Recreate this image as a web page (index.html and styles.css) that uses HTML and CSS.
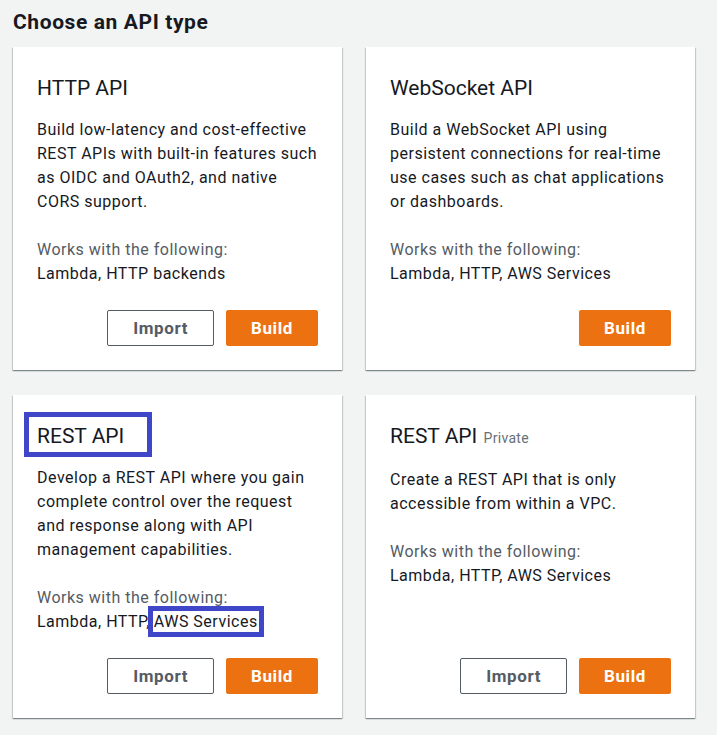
FILE: index.html
```html
<!DOCTYPE html>
<html lang="en">
<head>
<meta charset="utf-8">
<title>Choose an API type</title>
<link rel="stylesheet" href="styles.css">
</head>
<body>
<main class="page">
  <h1 class="page-title">Choose an API type</h1>
  <div class="grid">
    <section class="card">
      <h2 class="card-title">HTTP API</h2>
      <p class="desc">Build low-latency and cost-effective<br>REST APIs with built-in features such<br>as OIDC and OAuth2, and native<br>CORS support.</p>
      <div class="works">
        <div class="works-label">Works with the following:</div>
        <div class="works-list">Lambda, HTTP backends</div>
      </div>
      <div class="actions">
        <button class="btn btn-normal">Import</button>
        <button class="btn btn-primary">Build</button>
      </div>
    </section>
    <section class="card">
      <h2 class="card-title">WebSocket API</h2>
      <p class="desc">Build a WebSocket API using<br>persistent connections for real-time<br>use cases such as chat applications<br>or dashboards.</p>
      <div class="works">
        <div class="works-label">Works with the following:</div>
        <div class="works-list">Lambda, HTTP, AWS Services</div>
      </div>
      <div class="actions">
        <button class="btn btn-primary">Build</button>
      </div>
    </section>
    <section class="card">
      <h2 class="card-title"><span class="hl-title">REST API</span></h2>
      <p class="desc">Develop a REST API where you gain<br>complete control over the request<br>and response along with API<br>management capabilities.</p>
      <div class="works">
        <div class="works-label">Works with the following:</div>
        <div class="works-list">Lambda, HTTP,<span class="hl-inline">AWS Services</span></div>
      </div>
      <div class="actions">
        <button class="btn btn-normal">Import</button>
        <button class="btn btn-primary">Build</button>
      </div>
    </section>
    <section class="card">
      <h2 class="card-title">REST API <span class="card-tag">Private</span></h2>
      <p class="desc">Create a REST API that is only<br>accessible from within a VPC.</p>
      <div class="works">
        <div class="works-label">Works with the following:</div>
        <div class="works-list">Lambda, HTTP, AWS Services</div>
      </div>
      <div class="actions">
        <button class="btn btn-normal">Import</button>
        <button class="btn btn-primary">Build</button>
      </div>
    </section>
  </div>
</main>
</body>
</html>
```

FILE: styles.css
```css
*, *::before, *::after { box-sizing: border-box; }

html, body {
  margin: 0;
  padding: 0;
  background: #f2f3f3;
}

body {
  font-family: Roboto, "Liberation Sans", Arial, sans-serif;
  color: #16191f;
  font-size: 16px;
  line-height: 24px;
  letter-spacing: 0.5px;
}

.page {
  padding: 8px 0 20px 13px;
}

.page-title {
  margin: 0;
  font-size: 21px;
  line-height: 28px;
  font-weight: 700;
  letter-spacing: 0.6px;
  color: #16191f;
}

.grid {
  margin-top: 11px;
  display: grid;
  grid-template-columns: 329px 329px;
  column-gap: 24px;
  row-gap: 25px;
}

.card {
  position: relative;
  background: #ffffff;
  min-height: 323px;
  padding: 27px 24px 24px 24px;
  display: flex;
  flex-direction: column;
  box-shadow: 0 1px 1px 0 rgba(0, 28, 36, 0.3),
              1px 1px 1px 0 rgba(0, 28, 36, 0.15),
              -1px 1px 1px 0 rgba(0, 28, 36, 0.15);
}

.card-title {
  margin: 0;
  font-size: 21px;
  line-height: 28px;
  font-weight: 400;
  letter-spacing: 0;
  color: #16191f;
}

.card-tag {
  font-size: 14px;
  letter-spacing: 0.3px;
  color: #687078;
  margin-left: 1px;
}

.desc {
  margin: 16px 0 0 0;
  color: #16191f;
}

.works {
  margin-top: 24px;
}

.works-label {
  color: #545b64;
}

.works-list {
  color: #16191f;
}

.actions {
  margin-top: auto;
  display: flex;
  justify-content: flex-end;
  gap: 12px;
}

.btn {
  height: 36px;
  padding: 0 24px;
  border-radius: 2px;
  font-family: inherit;
  font-size: 17px;
  font-weight: 700;
  letter-spacing: 0.6px;
  line-height: 22px;
  cursor: pointer;
}

.btn-normal {
  background: #ffffff;
  border: 1px solid #545b64;
  color: #545b64;
  padding: 0 25px;
}

.btn-primary {
  background: #ec7211;
  border: 1px solid #ec7211;
  color: #ffffff;
}

.hl-title {
  position: relative;
}

.hl-title::after {
  content: "";
  position: absolute;
  left: -13px;
  top: -12px;
  width: 128px;
  height: 45px;
  border: 5px solid #4046c8;
}

.hl-inline {
  margin-left: 4px;
  outline: 5px solid #4046c8;
  outline-offset: 1px;
}
```
